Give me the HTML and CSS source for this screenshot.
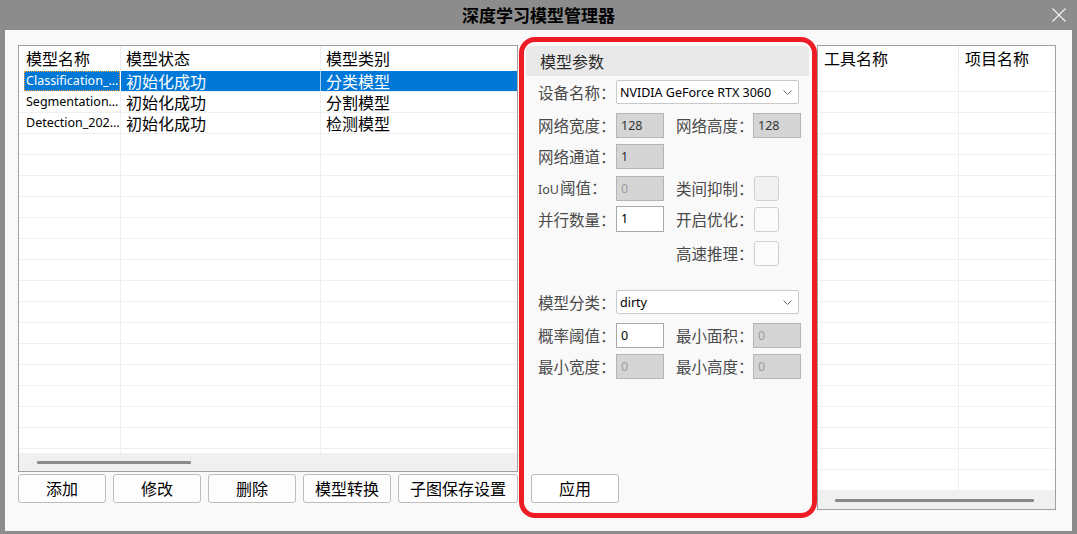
FILE: index.html
```html
<!DOCTYPE html>
<html lang="zh-CN">
<head>
<meta charset="utf-8">
<title>深度学习模型管理器</title>
<link rel="stylesheet" href="styles.css">
</head>
<body>
<div class="window">
  <div class="titlebar">
    <div class="tb-side"></div>
    <div class="title">深度学习模型管理器</div>
    <div class="tb-side tb-right">
      <svg class="close" width="14" height="14" viewBox="0 0 14 14"><path d="M0.5 0.5 L13.5 13.5 M13.5 0.5 L0.5 13.5" stroke="#f4f4f4" stroke-width="1.1" fill="none"/></svg>
    </div>
  </div>
  <div class="client">
    <div class="left-col">
      <div class="grid grid-left">
        <div class="g-head">
          <div class="g-cell lc1">模型名称</div>
          <div class="g-cell lc2">模型状态</div>
          <div class="g-cell lc3">模型类别</div>
        </div>
        <div class="g-body">
          <div class="g-row selected">
            <div class="g-cell lc1 latin"><span class="focus">Classification_…</span></div>
            <div class="g-cell lc2">初始化成功</div>
            <div class="g-cell lc3">分类模型</div>
          </div>
          <div class="g-row">
            <div class="g-cell lc1 latin">Segmentation…</div>
            <div class="g-cell lc2">初始化成功</div>
            <div class="g-cell lc3">分割模型</div>
          </div>
          <div class="g-row">
            <div class="g-cell lc1 latin">Detection_202…</div>
            <div class="g-cell lc2">初始化成功</div>
            <div class="g-cell lc3">检测模型</div>
          </div>
          <div class="g-row"><div class="g-cell lc1"></div><div class="g-cell lc2"></div><div class="g-cell lc3"></div></div>
          <div class="g-row"><div class="g-cell lc1"></div><div class="g-cell lc2"></div><div class="g-cell lc3"></div></div>
          <div class="g-row"><div class="g-cell lc1"></div><div class="g-cell lc2"></div><div class="g-cell lc3"></div></div>
          <div class="g-row"><div class="g-cell lc1"></div><div class="g-cell lc2"></div><div class="g-cell lc3"></div></div>
          <div class="g-row"><div class="g-cell lc1"></div><div class="g-cell lc2"></div><div class="g-cell lc3"></div></div>
          <div class="g-row"><div class="g-cell lc1"></div><div class="g-cell lc2"></div><div class="g-cell lc3"></div></div>
          <div class="g-row"><div class="g-cell lc1"></div><div class="g-cell lc2"></div><div class="g-cell lc3"></div></div>
          <div class="g-row"><div class="g-cell lc1"></div><div class="g-cell lc2"></div><div class="g-cell lc3"></div></div>
          <div class="g-row"><div class="g-cell lc1"></div><div class="g-cell lc2"></div><div class="g-cell lc3"></div></div>
          <div class="g-row"><div class="g-cell lc1"></div><div class="g-cell lc2"></div><div class="g-cell lc3"></div></div>
          <div class="g-row"><div class="g-cell lc1"></div><div class="g-cell lc2"></div><div class="g-cell lc3"></div></div>
          <div class="g-row"><div class="g-cell lc1"></div><div class="g-cell lc2"></div><div class="g-cell lc3"></div></div>
          <div class="g-row"><div class="g-cell lc1"></div><div class="g-cell lc2"></div><div class="g-cell lc3"></div></div>
          <div class="g-row"><div class="g-cell lc1"></div><div class="g-cell lc2"></div><div class="g-cell lc3"></div></div>
          <div class="g-row"><div class="g-cell lc1"></div><div class="g-cell lc2"></div><div class="g-cell lc3"></div></div>
          <div class="g-filler"><div class="g-cell lc1"></div><div class="g-cell lc2"></div><div class="g-cell lc3"></div></div>
        </div>
        <div class="hscroll hscroll-left"><div class="thumb thumb-left"></div></div>
      </div>
      <div class="btn-row">
        <button class="btn">添加</button>
        <button class="btn">修改</button>
        <button class="btn">删除</button>
        <button class="btn">模型转换</button>
        <button class="btn btn-wide">子图保存设置</button>
      </div>
    </div>

    <div class="params">
      <div class="p-head">模型参数</div>
      <div class="form">
        <div class="frow gap-4 h24">
          <div class="lbl">设备名称：</div>
          <div class="select"><span>NVIDIA GeForce RTX 3060</span><svg width="9" height="5" viewBox="0 0 9 5"><polyline points="0.5,0.5 4.5,4.5 8.5,0.5" fill="none" stroke="#6a6a6a" stroke-width="1"/></svg></div>
        </div>
        <div class="frow gap-9">
          <div class="lbl">网络宽度：</div>
          <div class="field">128</div>
          <div class="lbl lbl2">网络高度：</div>
          <div class="field">128</div>
        </div>
        <div class="frow gap-6">
          <div class="lbl">网络通道：</div>
          <div class="field">1</div>
        </div>
        <div class="frow gap-7">
          <div class="lbl"><span class="lbl-latin">IoU</span>阈值：</div>
          <div class="field dim">0</div>
          <div class="lbl lbl2">类间抑制：</div>
          <div class="check check-off"></div>
        </div>
        <div class="frow gap-5 h26">
          <div class="lbl">并行数量：</div>
          <div class="field white">1</div>
          <div class="lbl lbl2">开启优化：</div>
          <div class="check"></div>
        </div>
        <div class="frow gap-9">
          <div class="lbl"></div>
          <div class="spacer-field"></div>
          <div class="lbl lbl2">高速推理：</div>
          <div class="check"></div>
        </div>
        <div class="frow gap-24 h24">
          <div class="lbl">模型分类：</div>
          <div class="select"><span>dirty</span><svg width="9" height="5" viewBox="0 0 9 5"><polyline points="0.5,0.5 4.5,4.5 8.5,0.5" fill="none" stroke="#6a6a6a" stroke-width="1"/></svg></div>
        </div>
        <div class="frow gap-9">
          <div class="lbl">概率阈值：</div>
          <div class="field white">0</div>
          <div class="lbl lbl2">最小面积：</div>
          <div class="field dim">0</div>
        </div>
        <div class="frow gap-6">
          <div class="lbl">最小宽度：</div>
          <div class="field dim">0</div>
          <div class="lbl lbl2">最小高度：</div>
          <div class="field dim">0</div>
        </div>
      </div>
      <button class="btn btn-apply">应用</button>
    </div>

    <div class="grid grid-right">
      <div class="g-head">
        <div class="g-cell rc1">工具名称</div>
        <div class="g-cell rc2">项目名称</div>
      </div>
      <div class="g-body">
        <div class="g-row"><div class="g-cell rc1"></div><div class="g-cell rc2"></div></div>
        <div class="g-row"><div class="g-cell rc1"></div><div class="g-cell rc2"></div></div>
        <div class="g-row"><div class="g-cell rc1"></div><div class="g-cell rc2"></div></div>
        <div class="g-row"><div class="g-cell rc1"></div><div class="g-cell rc2"></div></div>
        <div class="g-row"><div class="g-cell rc1"></div><div class="g-cell rc2"></div></div>
        <div class="g-row"><div class="g-cell rc1"></div><div class="g-cell rc2"></div></div>
        <div class="g-row"><div class="g-cell rc1"></div><div class="g-cell rc2"></div></div>
        <div class="g-row"><div class="g-cell rc1"></div><div class="g-cell rc2"></div></div>
        <div class="g-row"><div class="g-cell rc1"></div><div class="g-cell rc2"></div></div>
        <div class="g-row"><div class="g-cell rc1"></div><div class="g-cell rc2"></div></div>
        <div class="g-row"><div class="g-cell rc1"></div><div class="g-cell rc2"></div></div>
        <div class="g-row"><div class="g-cell rc1"></div><div class="g-cell rc2"></div></div>
        <div class="g-row"><div class="g-cell rc1"></div><div class="g-cell rc2"></div></div>
        <div class="g-row"><div class="g-cell rc1"></div><div class="g-cell rc2"></div></div>
        <div class="g-row"><div class="g-cell rc1"></div><div class="g-cell rc2"></div></div>
        <div class="g-row"><div class="g-cell rc1"></div><div class="g-cell rc2"></div></div>
        <div class="g-row"><div class="g-cell rc1"></div><div class="g-cell rc2"></div></div>
        <div class="g-row"><div class="g-cell rc1"></div><div class="g-cell rc2"></div></div>
        <div class="g-row"><div class="g-cell rc1"></div><div class="g-cell rc2"></div></div>
        <div class="g-row"><div class="g-cell rc1"></div><div class="g-cell rc2"></div></div>
      </div>
      <div class="hscroll hscroll-right"><div class="thumb thumb-right"></div></div>
    </div>
  </div>
</div>
</body>
</html>
```
FILE: styles.css
```css
* { box-sizing: border-box; }
html, body { margin: 0; padding: 0; }
body {
  width: 1077px;
  height: 534px;
  overflow: hidden;
  font-family: "Noto Sans CJK SC", "Noto Sans", sans-serif;
  background: #8c8c8c;
}

.window {
  width: 1077px;
  height: 534px;
  background: #8c8c8c;
  padding: 0 5px 3px 5px;
  display: flex;
  flex-direction: column;
}

.titlebar {
  height: 30px;
  flex: none;
  display: grid;
  grid-template-columns: 1fr auto 1fr;
  align-items: center;
}
.title {
  font-size: 17px;
  font-weight: bold;
  color: #000;
  line-height: 30px;
}
.tb-right {
  display: flex;
  justify-content: flex-end;
  padding-right: 6px;
}
.close { display: block; }

.client {
  flex: 1;
  background: #f9f9f9;
  display: flex;
  align-items: flex-start;
  padding-left: 13px;
}

/* ---------- grids ---------- */
.left-col {
  margin-top: 15px;
  width: 500px;
  display: flex;
  flex-direction: column;
}
.grid {
  border: 1px solid #a0a0a0;
  background: #fff;
  display: flex;
  flex-direction: column;
}
.grid-left { height: 427px; }
.grid-right { margin-top: 15px; width: 239px; height: 465px; }

.g-head { height: 25px; display: flex; flex: none; }
.g-body { flex: 1; display: flex; flex-direction: column; overflow: hidden; }
.g-row {
  height: 21px;
  flex: none;
  display: flex;
  border-bottom: 1px solid #f0f0f0;
}
.g-filler { flex: 1; display: flex; }

.g-cell {
  font-size: 16px;
  line-height: 20px;
  color: #000;
  white-space: nowrap;
  border-right: 1px solid #efefef;
}
.g-head .g-cell {
  line-height: 25px;
  border-right-color: #ececec;
}
.latin {
  font-family: "Noto Sans", sans-serif;
  font-size: 12.5px;
  overflow: hidden;
}

.lc1 { width: 102px; padding-left: 7px; flex: none; }
.lc2 { width: 200px; padding-left: 5px; flex: none; }
.lc3 { flex: 1; padding-left: 5px; border-right: none; }
.rc1 { width: 141px; padding-left: 6px; flex: none; }
.rc2 { flex: 1; padding-left: 6px; border-right: none; }

.selected { background: #0078d7; }
.selected .g-cell {
  color: #fff;
  border-right-color: rgba(255, 255, 255, 0.65);
}
.selected .lc1 { background: #fff; padding-left: 5px; }
.focus {
  display: block;
  height: 20px;
  background: #0078d7;
  border: 1px dotted #f0a030;
  padding-left: 1px;
  line-height: 18px;
  overflow: hidden;
}

.hscroll {
  height: 18px;
  flex: none;
  background: #f0f0f0;
}
.hscroll-left { padding: 8px 0 0 18px; }
.hscroll-right { padding: 8px 0 0 17px; }
.thumb { height: 3px; background: #8a8a8a; border-radius: 1px; }
.thumb-left { width: 154px; }
.thumb-right { width: 199px; }

/* ---------- buttons ---------- */
.btn-row {
  display: flex;
  gap: 7px;
  margin-top: 2px;
}
.btn {
  height: 29px;
  width: 88px;
  padding: 0;
  border: 1px solid #bdbdbd;
  border-radius: 3px;
  background: #fdfdfd;
  font-family: "Noto Sans CJK SC", sans-serif;
  font-size: 16px;
  line-height: 27px;
  color: #000;
}
.btn-wide { width: 120px; }

/* ---------- params panel ---------- */
.params {
  margin-top: 7px;
  margin-left: 1px;
  width: 298px;
  height: 481px;
  border: 5px solid #ee1c25;
  border-radius: 16px;
  background: #f9f9f9;
  display: flex;
  flex-direction: column;
  padding: 4px 3px 10px 2px;
}
.p-head {
  height: 30px;
  flex: none;
  background: #e9e9e9;
  border-radius: 4px 4px 0 0;
  font-size: 16px;
  line-height: 30px;
  padding-left: 14px;
  color: #2a2a2a;
}
.form { padding-left: 12px; }

.frow {
  display: flex;
  align-items: center;
  height: 25px;
}
.h24 { height: 24px; }
.h26 { height: 26px; }
.gap-4 { margin-top: 4px; }
.gap-5 { margin-top: 5px; }
.gap-6 { margin-top: 6px; }
.gap-7 { margin-top: 7px; }
.gap-9 { margin-top: 9px; }
.gap-24 { margin-top: 24px; }

.lbl {
  width: 78px;
  flex: none;
  font-size: 15.5px;
  line-height: 25px;
  color: #4a4a4a;
  white-space: nowrap;
}
.lbl-latin {
  font-family: "Noto Sans", sans-serif;
  font-size: 12.5px;
  margin-right: 1px;
}
.lbl2 { margin-left: 12px; width: 77px; }

.field, .spacer-field {
  width: 48px;
  height: 25px;
  flex: none;
}
.frow.h26 .field { height: 26px; }
.field {
  border: 1px solid #b5b5b5;
  background: #d5d5d5;
  font-family: "Noto Sans", sans-serif;
  font-size: 12.5px;
  line-height: 23px;
  padding-left: 4px;
  color: #333;
}
.field.white { background: #fff; border-color: #a9a9a9; color: #000; }
.field.dim { color: #9c9c9c; }

.check {
  width: 25px;
  height: 25px;
  flex: none;
  margin-left: 1px;
  border: 1px solid #d0d0d0;
  border-radius: 3px;
  background: #fbfbfb;
}
.check-off { background: #f1f1f1; }

.select {
  width: 183px;
  height: 24px;
  flex: none;
  border: 1px solid #c9c9c9;
  border-radius: 2px;
  background: #fff;
  display: flex;
  align-items: center;
  justify-content: space-between;
  padding: 0 6px 0 3px;
  font-family: "Noto Sans", sans-serif;
  font-size: 12.5px;
  color: #000;
}
.select svg { display: block; }

.btn-apply {
  margin-top: auto;
  margin-left: 5px;
  background: #fff;
}
```
